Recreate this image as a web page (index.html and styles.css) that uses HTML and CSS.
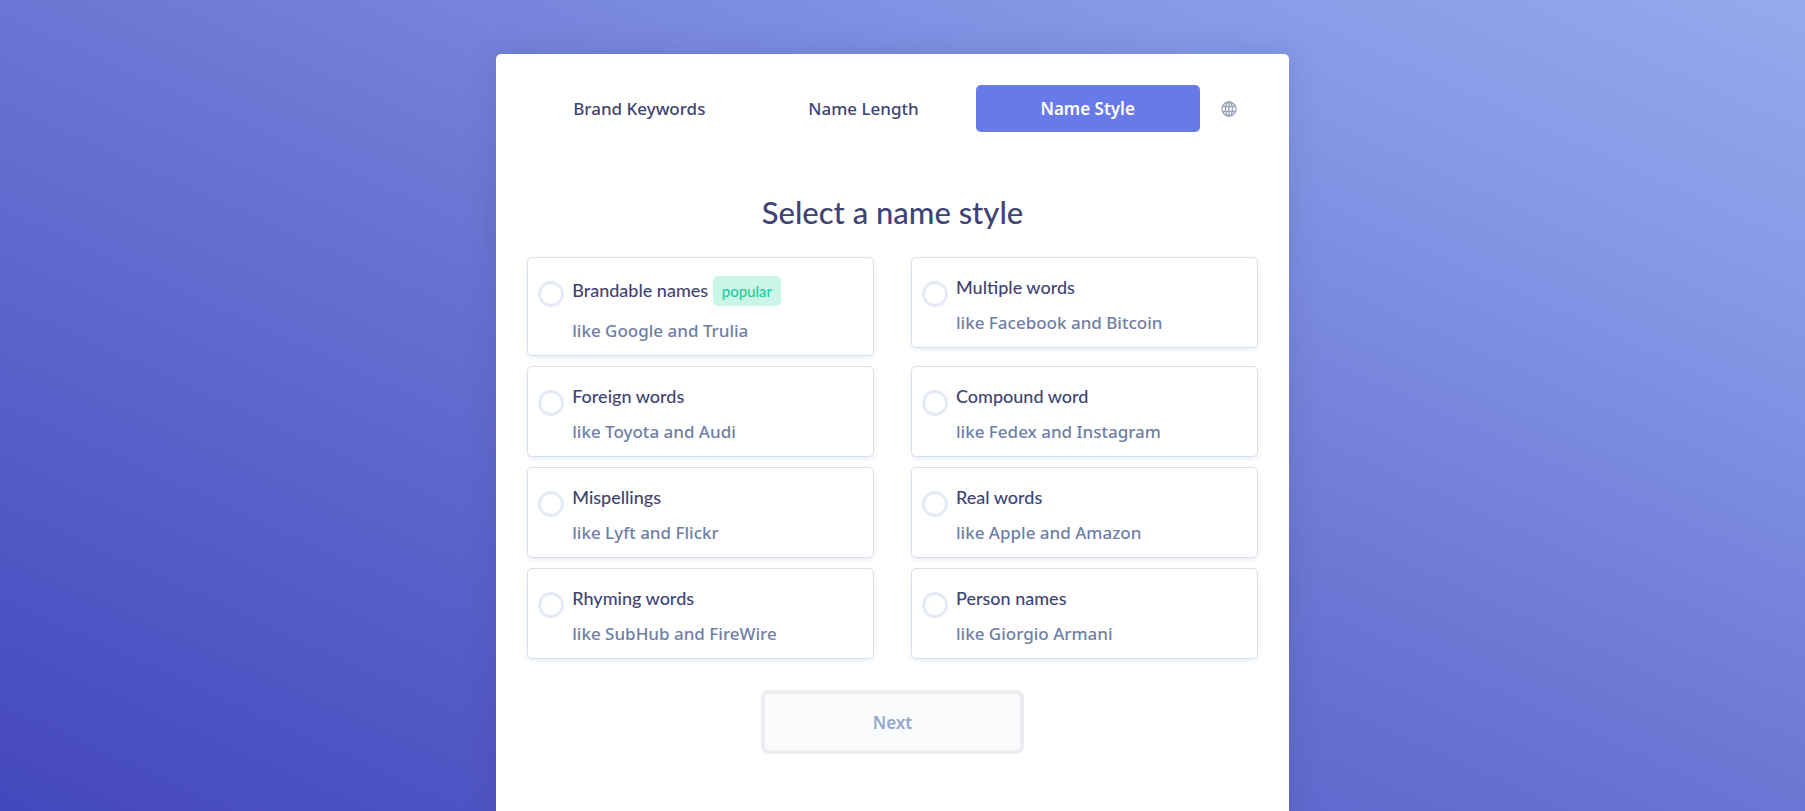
FILE: index.html
```
<!DOCTYPE html>
<html lang="en">
<head>
  <meta charset="UTF-8">
  <meta name="viewport" content="width=device-width, initial-scale=1.0">
  <title>Name Style</title>
  <link rel="stylesheet" href="styles.css">
</head>
<body>

  <main class="panel">
    <nav class="steps">
      <a href="#keywords" class="step">Brand Keywords</a>
      <a href="#length" class="step">Name Length</a>
      <a href="#style" class="step active">Name Style</a>
      <button type="button" class="language" aria-label="Language">
        <svg viewBox="0 0 16 16" width="16" height="16" fill="none" stroke="currentColor" stroke-width="1.3">
          <circle cx="8" cy="8" r="7"/>
          <ellipse cx="8" cy="8" rx="3.5" ry="7"/>
          <path d="M8 1v14M1.5 5.5h13M1.5 10.5h13"/>
        </svg>
      </button>
    </nav>

    <form class="style-form">
      <h1>Select a name style</h1>

      <div class="options">
        <label class="option">
          <input type="radio" name="style" value="brandable">
          <span class="option-text">
            <span class="option-title">Brandable names <span class="badge">popular</span></span>
            <span class="option-hint">like Google and Trulia</span>
          </span>
        </label>
        <label class="option">
          <input type="radio" name="style" value="multiple">
          <span class="option-text">
            <span class="option-title">Multiple words</span>
            <span class="option-hint">like Facebook and Bitcoin</span>
          </span>
        </label>
        <label class="option">
          <input type="radio" name="style" value="foreign">
          <span class="option-text">
            <span class="option-title">Foreign words</span>
            <span class="option-hint">like Toyota and Audi</span>
          </span>
        </label>
        <label class="option">
          <input type="radio" name="style" value="compound">
          <span class="option-text">
            <span class="option-title">Compound word</span>
            <span class="option-hint">like Fedex and Instagram</span>
          </span>
        </label>
        <label class="option">
          <input type="radio" name="style" value="mispellings">
          <span class="option-text">
            <span class="option-title">Mispellings</span>
            <span class="option-hint">like Lyft and Flickr</span>
          </span>
        </label>
        <label class="option">
          <input type="radio" name="style" value="real">
          <span class="option-text">
            <span class="option-title">Real words</span>
            <span class="option-hint">like Apple and Amazon</span>
          </span>
        </label>
        <label class="option">
          <input type="radio" name="style" value="rhyming">
          <span class="option-text">
            <span class="option-title">Rhyming words</span>
            <span class="option-hint">like SubHub and FireWire</span>
          </span>
        </label>
        <label class="option">
          <input type="radio" name="style" value="person">
          <span class="option-text">
            <span class="option-title">Person names</span>
            <span class="option-hint">like Giorgio Armani</span>
          </span>
        </label>
      </div>

      <button type="submit" class="next" disabled>Next</button>
    </form>
  </main>

</body>
</html>
```
FILE: styles.css
```
* {
  box-sizing: border-box;
}

body {
  margin: 0;
  min-height: 100vh;
  padding: 54px 20px 0 0;
  display: flex;
  justify-content: center;
  font-family: 'Noto Sans', sans-serif;
  font-size: 17px;
  font-weight: 500;
  color: #3f4474;
  background: linear-gradient(to top right, #4347bd, #6b75d3 50%, #8498e6 80%, #95a9ed);
}

.panel {
  width: 44.4%;
  min-width: 640px;
  padding: 31px;
  background: #fff;
  border-radius: 5px 5px 0 0;
  box-shadow: 0 0 30px rgba(50, 50, 93, 0.15);
}

.steps {
  display: flex;
  align-items: center;
}

.step {
  flex: 1;
  padding: 10px 0;
  line-height: 27px;
  text-align: center;
  text-decoration: none;
  color: inherit;
  border-radius: 5px;
}

.step.active {
  background: #687ae8;
  color: #fff;
  font-weight: 600;
}

.language {
  width: 58px;
  height: 27px;
  padding: 0;
  border: none;
  background: none;
  color: #9ba3b8;
  cursor: pointer;
}

.language svg {
  display: block;
  margin: 0 auto;
}

.style-form {
  display: flex;
  flex-direction: column;
  align-items: center;
}

h1 {
  margin: 60px 0 25px;
  font-family: Lato, sans-serif;
  font-size: 31px;
  font-weight: 500;
  line-height: 40px;
}

.options {
  width: 100%;
  display: grid;
  grid-template-columns: 1fr 1fr;
  align-items: start;
  gap: 10px 37px;
}

.option {
  display: flex;
  gap: 8px;
  padding: 14px 10px 11px;
  border: 1px solid #d4e0ec;
  border-radius: 5px;
  box-shadow: 0 2px 4px rgba(126, 142, 177, 0.15);
  cursor: pointer;
}

.option input {
  appearance: none;
  flex: none;
  width: 26px;
  height: 26px;
  margin: 9px 0 0;
  border: 3px solid #e4ebf6;
  border-radius: 50%;
}

.option input:checked {
  border-color: #687ae8;
}

.option-text {
  display: flex;
  flex-direction: column;
  gap: 8px;
}

.option-title {
  font-family: Lato, sans-serif;
  font-size: 18px;
  line-height: 30px;
}

.option-hint {
  line-height: 26px;
  color: #6f80a6;
}

.badge {
  display: inline-block;
  margin: 4px 0;
  padding: 0 9px;
  border-radius: 5px;
  background: #ccf5ea;
  color: #23ce98;
  font-size: 15px;
}

.next {
  width: 263px;
  height: 64px;
  margin: 31px 0;
  border: 4px solid #ebedf1;
  border-radius: 8px;
  background: #fafbfd;
  color: #94a8cf;
  font: inherit;
  font-weight: 600;
}
```
